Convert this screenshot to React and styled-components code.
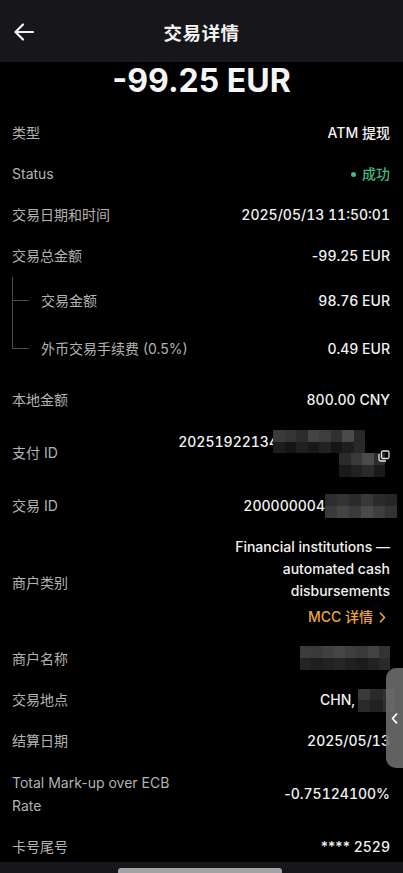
import React from "react";
import styled, { createGlobalStyle } from "styled-components";

const Global = createGlobalStyle`
  html, body { margin: 0; padding: 0; background: #000; }
  body { font-family: "Inter", "Noto Sans CJK SC", sans-serif; -webkit-font-smoothing: antialiased; }
  * { box-sizing: border-box; }
`;

const Page = styled.div`
  position: relative;
  width: 403px;
  height: 873px;
  display: flex;
  flex-direction: column;
  background: #000;
  overflow: hidden;
  font-family: "Inter", "Noto Sans CJK SC", sans-serif;
`;

const Header = styled.header`
  flex: 0 0 62px;
  display: grid;
  grid-template-columns: 56px 1fr 56px;
  align-items: center;
  background: #16161b;
`;

const BackButton = styled.div`
  display: flex;
  align-items: center;
  padding-left: 14px;
  padding-top: 2px;
`;

const Title = styled.h1`
  margin: 0;
  text-align: center;
  color: #f2f2f2;
  font-size: 18.5px;
  font-weight: 600;
  letter-spacing: 0.5px;
  padding-top: 1px;
`;

const Content = styled.main`
  flex: 1;
  overflow: hidden;
`;

const Amount = styled.div`
  text-align: center;
  color: #f5f5f5;
  font-size: 32px;
  font-weight: 700;
  line-height: 38px;
  padding: 0 0 12.5px;
`;

const Row = styled.div`
  display: flex;
  justify-content: space-between;
  align-items: center;
  gap: 12px;
  padding: ${(p) => p.$pad || "9.5px"} 13px ${(p) => p.$pad || "9.5px"} 12px;
`;

const Label = styled.div`
  color: #b3b3b3;
  font-size: 14px;
  line-height: ${(p) => p.$lh || "22px"};
  max-width: ${(p) => p.$max || "none"};
  flex-shrink: 0;
`;

const Value = styled.div`
  color: #f2f2f2;
  font-size: 14px;
  font-weight: 500;
  line-height: 22px;
  text-align: right;
  display: flex;
  flex-direction: column;
  align-items: flex-end;
  font-variant-numeric: tabular-nums;
  margin-right: ${(p) => p.$mr || "0"};
`;

const Plain = styled.span`
  font-variant-numeric: normal;
  font-feature-settings: normal;
`;

const ValueLine = styled.div`
  height: 22px;
  display: flex;
  align-items: center;
  justify-content: flex-end;
  white-space: nowrap;
`;

const StatusValue = styled.div`
  display: flex;
  align-items: center;
  gap: 6px;
  color: #3fb97d;
  font-size: 14px;
  font-weight: 500;
  line-height: 22px;
`;

const Dot = styled.span`
  width: 5px;
  height: 5px;
  border-radius: 50%;
  background: #3fb97d;
`;

const SubGroup = styled.div`
  padding-bottom: 7px;
`;

const SubRow = styled.div`
  display: flex;
  align-items: stretch;
  padding: 0 13px 0 12px;
  height: 48px;
`;

const Branch = styled.div`
  width: 17px;
  display: flex;
  flex-direction: column;
  margin-right: 12px;
`;

const BranchTop = styled.div`
  flex: 1;
  border-left: 1px solid #4a4a4a;
  border-bottom: 1px solid #4a4a4a;
`;

const BranchBottom = styled.div`
  flex: 1;
  border-left: 1px solid ${(p) => (p.$last ? "transparent" : "#4a4a4a")};
`;

const SubBody = styled.div`
  flex: 1;
  display: flex;
  justify-content: space-between;
  align-items: center;
`;

const MccLink = styled.div`
  color: #eba53a;
  font-size: 14px;
  font-weight: 500;
  line-height: 24px;
  margin-top: 3px;
  margin-right: 4px;
  display: flex;
  align-items: center;
  gap: 6px;
`;

const MosaicGrid = styled.div`
  display: grid;
  grid-template-columns: repeat(${(p) => p.$cols}, 1fr);
  width: ${(p) => p.$w}px;
  height: ${(p) => p.$h}px;
  margin-left: ${(p) => p.$ml || 0}px;
  margin-right: ${(p) => p.$mr || 0}px;
  margin-top: ${(p) => p.$mt || 0}px;
  flex-shrink: 0;
`;

const Cell = styled.span`
  background: ${(p) => p.$c};
`;

const Mosaic = ({ cols, w, h, colors, ml, mr, mt }) => (
  <MosaicGrid $cols={cols} $w={w} $h={h} $ml={ml} $mr={mr} $mt={mt}>
    {colors.map((c, i) => (
      <Cell key={i} $c={c} />
    ))}
  </MosaicGrid>
);

const CopyIcon = styled.svg`
  flex-shrink: 0;
  margin-left: -7px;
  margin-top: -16px;
`;

const Handle = styled.div`
  position: absolute;
  right: 0;
  top: 668px;
  width: 17px;
  height: 100px;
  border-radius: 10px 0 0 10px;
  background: rgba(108, 108, 108, 0.9);
  display: flex;
  align-items: center;
  justify-content: center;
`;

const BottomBar = styled.div`
  flex: 0 0 11px;
  background: #16161b;
  display: flex;
  justify-content: center;
  align-items: flex-end;
  position: relative;
  z-index: 1;
`;

const Indicator = styled.div`
  width: 164px;
  height: 5px;
  border-radius: 3px 3px 0 0;
  background: #a3a3a3;
  margin-left: -4px;
`;

const Arrow = () => (
  <svg width="20" height="18" viewBox="0 0 20 18" fill="none">
    <path d="M19 9H1.6M9 1.5L1.5 9L9 16.5" stroke="#f2f2f2" strokeWidth="2.2" strokeLinecap="round" strokeLinejoin="round" />
  </svg>
);

const Chevron = () => (
  <svg width="7" height="11" viewBox="0 0 7 11" fill="none">
    <path d="M5.5 1.2L1.5 5.5L5.5 9.8" stroke="#fff" strokeWidth="1.8" strokeLinecap="round" strokeLinejoin="round" />
  </svg>
);

const ChevronRight = () => (
  <svg width="7" height="11" viewBox="0 0 7 11" fill="none">
    <path d="M1.5 1.2L5.5 5.5L1.5 9.8" stroke="#eba53a" strokeWidth="1.6" strokeLinecap="round" strokeLinejoin="round" />
  </svg>
);

const SimpleRow = ({ label, children, labelMax, labelLh, pad }) => (
  <Row $pad={pad}>
    <Label $max={labelMax} $lh={labelLh}>{label}</Label>
    {children}
  </Row>
);

export default function App() {
  return (
    <>
      <Global />
      <Page>
        <Header>
          <BackButton>
            <Arrow />
          </BackButton>
          <Title>交易详情</Title>
          <div />
        </Header>
        <Content>
          <Amount>-99.25 EUR</Amount>

          <SimpleRow label="类型">
            <Value>ATM 提现</Value>
          </SimpleRow>
          <SimpleRow label="Status">
            <StatusValue>
              <Dot />
              成功
            </StatusValue>
          </SimpleRow>
          <SimpleRow label="交易日期和时间">
            <Value>2025/05/13 11:50:01</Value>
          </SimpleRow>
          <SimpleRow label="交易总金额">
            <Value>
              <div>
                <Plain>-</Plain>99.25 EUR
              </div>
            </Value>
          </SimpleRow>

          <SubGroup>
            <SubRow>
              <Branch>
                <BranchTop />
                <BranchBottom />
              </Branch>
              <SubBody>
                <Label>交易金额</Label>
                <Value>98.76 EUR</Value>
              </SubBody>
            </SubRow>
            <SubRow>
              <Branch>
                <BranchTop />
                <BranchBottom $last />
              </Branch>
              <SubBody>
                <Label>外币交易手续费 (0.5%)</Label>
                <Value>0.49 EUR</Value>
              </SubBody>
            </SubRow>
          </SubGroup>

          <SimpleRow label="本地金额">
            <Value>800.00 CNY</Value>
          </SimpleRow>

          <SimpleRow label="支付 ID" pad="10.5px">
            <Value>
              <ValueLine>
                20251922134
                <Mosaic
                  cols={8}
                  w={92}
                  h={23}
                  ml={-5}
                  mr={25}
                  mt={-1}
                  colors={[
                    "#3a3a3a", "#353535", "#2c2c2c", "#444444", "#3d3d3d", "#303030", "#4a4a4a", "#282828",
                    "#1c1c1c", "#141414", "#202020", "#181818", "#222222", "#151515", "#1e1e1e", "#2a2a2a",
                  ]}
                />
              </ValueLine>
              <ValueLine>
                <Mosaic
                  cols={4}
                  w={46}
                  h={24}
                  mt={2}
                  colors={["#2a2a2a", "#3a3a3a", "#4a4a4a", "#2c2c2c", "#1a1a1a", "#222222", "#2a2a2a", "#1a1a1a"]}
                />
                <CopyIcon width="12" height="12" viewBox="0 0 12 12" fill="none">
                  <rect x="3.5" y="1" width="7.5" height="7.5" rx="1.5" stroke="#e0e0e0" strokeWidth="1.3" />
                  <path d="M1 4v5.5A1.5 1.5 0 0 0 2.5 11H8" stroke="#e0e0e0" strokeWidth="1.3" />
                </CopyIcon>
              </ValueLine>
            </Value>
          </SimpleRow>

          <SimpleRow label="交易 ID">
            <Value $mr="-7px">
              <ValueLine>
                200000004
                <Mosaic
                  cols={6}
                  w={72}
                  h={24}
                  colors={[
                    "#2e2e2e", "#333333", "#2a2a2a", "#383838", "#2b2b2b", "#262626",
                    "#3a3a3a", "#444444", "#3a3a3a", "#4a4a4a", "#3e3e3e", "#333333",
                  ]}
                />
              </ValueLine>
            </Value>
          </SimpleRow>

          <SimpleRow label="商户类别">
            <Value>
              <div>
                Financial institutions —<br />
                automated cash
                <br />
                disbursements
              </div>
              <MccLink>
                MCC 详情 <ChevronRight />
              </MccLink>
            </Value>
          </SimpleRow>

          <SimpleRow label="商户名称">
            <Value>
              <ValueLine>
                <Mosaic
                  cols={8}
                  w={90}
                  h={24}
                  mt={-2}
                  colors={[
                    "#3c3c3c", "#3a3a3a", "#404040", "#464646", "#3e3e3e", "#3a3a3a", "#424242", "#333333",
                    "#242424", "#1e1e1e", "#222222", "#262626", "#202020", "#1c1c1c", "#222222", "#2a2a2a",
                  ]}
                />
              </ValueLine>
            </Value>
          </SimpleRow>

          <SimpleRow label="交易地点">
            <Value>
              <ValueLine>
                CHN,
                <Mosaic
                  cols={3}
                  w={37}
                  h={23}
                  ml={3}
                  mr={-5}
                  colors={["#3a3a3a", "#2a2a2a", "#333333", "#2a2a2a", "#222222", "#2e2e2e"]}
                />
              </ValueLine>
            </Value>
          </SimpleRow>

          <SimpleRow label="结算日期">
            <Value>2025/05/13</Value>
          </SimpleRow>

          <SimpleRow label="Total Mark-up over ECB Rate" labelMax="170px" labelLh="23px">
            <Value>
              <div>
                <Plain>-</Plain>0.75124100%
              </div>
            </Value>
          </SimpleRow>

          <SimpleRow label="卡号尾号">
            <Value>
              <div>
                <Plain>****</Plain> 2529
              </div>
            </Value>
          </SimpleRow>
        </Content>
        <BottomBar>
          <Indicator />
        </BottomBar>
        <Handle>
          <Chevron />
        </Handle>
      </Page>
    </>
  );
}
